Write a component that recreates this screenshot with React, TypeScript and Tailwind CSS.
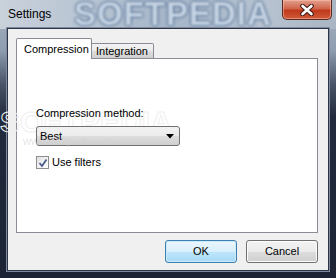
import React from "react";

const font = { fontFamily: '"Liberation Sans", Arial, sans-serif' };

function CloseX() {
  return (
    <svg width="14" height="12" viewBox="0 0 14 12">
      <path d="M2.5 2 L11.5 10 M11.5 2 L2.5 10" stroke="#3b1a14" strokeWidth="4.6" strokeLinecap="round" />
      <path d="M2.5 2 L11.5 10 M11.5 2 L2.5 10" stroke="#ffffff" strokeWidth="2.6" strokeLinecap="round" />
    </svg>
  );
}

export default function App() {
  return (
    <div
      className="relative w-[336px] h-[278px] overflow-hidden flex flex-col bg-[linear-gradient(180deg,#a9b6c5_0%,#8f9db0_18%,#4a5569_30%,#222b3d_42%,#1b2334_100%)]"
      style={font}
    >
      {/* Title bar */}
      <div className="relative h-[29px] shrink-0 flex items-start overflow-hidden bg-[linear-gradient(90deg,#c9d1db_0%,#b9c5d3_25%,#a6b6c9_50%,#b6c2d0_80%,#a9b5c3_100%)]">
        <div className="absolute left-[74px] top-[-4px] text-[33px] leading-[36px] font-bold tracking-[1px] text-[#c4d2e2] blur-[1.2px] whitespace-nowrap select-none [text-shadow:0_0_3px_#34557f,0_0_2px_#34557f]">
          SOFTPEDIA
        </div>
        <div className="relative pl-[8px] pt-[7px] text-[12px] leading-[15px] text-black">Settings</div>
        <div className="absolute right-[4px] top-0 w-[50px] h-[20px] rounded-b-[5px] border border-t-0 border-[#5a2a22] bg-[linear-gradient(180deg,#e2a08f_0%,#d1654b_45%,#c0391b_55%,#cf5a3a_100%)] flex items-center justify-center shadow-[inset_0_0_0_1px_rgba(255,200,180,0.5)]">
          <CloseX />
        </div>
      </div>

      {/* Body with frame */}
      <div className="flex-1 px-[8px] pb-[8px] flex">
        <div className="relative flex-1 flex flex-col bg-[#f0f0f0] pt-[9px] pl-[8px] pr-[10px] pb-[7px] shadow-[0_0_0_1px_#2c3446,0_0_0_2px_#7d8aa0]">
          {/* Tabs */}
          <div className="relative z-10 -mb-px flex items-end h-[21px] text-[11px] leading-[13px] text-black">
            <div className="w-[76px] h-[21px] bg-white border-t border-l border-r border-[#898c95] rounded-t-[2px] flex items-start pt-[4px] pl-[7px]">
              Compression
            </div>
            <div className="w-[62px] h-[16px] border-t border-r border-b border-[#898c95] bg-[linear-gradient(180deg,#f2f2f2_0%,#ebebeb_50%,#dddddd_51%,#cfcfcf_100%)] rounded-tr-[2px] flex items-start pt-[1px] pl-[4px]">
              Integration
            </div>
          </div>

          {/* Panel */}
          <div className="relative h-[175px] border border-[#898c95] bg-white pl-[19px] pt-[47px] text-[11px] text-black">
            <div className="absolute left-[-17px] top-[40px] text-[30px] font-bold text-transparent [-webkit-text-stroke:1px_#efefef] whitespace-nowrap select-none pointer-events-none">
              SOFTPEDIA
            </div>
            <div className="relative h-[15px] leading-[15px]">Compression method:</div>
            <div className="relative mt-[5px] w-[144px] h-[20px] rounded-[3px] border border-[#707070] bg-[linear-gradient(180deg,#f2f2f2_0%,#ebebeb_50%,#dddddd_51%,#cfcfcf_100%)] flex items-center justify-between pl-[3px] pr-[5px]">
              <span className="leading-[13px]">Best</span>
              <svg width="8" height="5" viewBox="0 0 8 5">
                <path d="M0 0 H8 L4 4.5 Z" fill="#000" />
              </svg>
              <div className="absolute left-[-14px] top-[6px] text-[11px] text-[#d2d2d2] opacity-60 whitespace-nowrap pointer-events-none">
                www.softpedia.com
              </div>
            </div>
            <div className="mt-[10px] flex items-center h-[13px]">
              <div className="w-[13px] h-[13px] border border-[#8e8f8f] bg-[linear-gradient(135deg,#dedede_0%,#f6f6f6_60%,#ffffff_100%)] flex items-center justify-center">
                <svg width="10" height="10" viewBox="0 0 10 10">
                  <path d="M1.5 5 L4 8 L8.5 1.5" stroke="#4a5d8c" strokeWidth="1.8" fill="none" />
                </svg>
              </div>
              <span className="ml-[3px] leading-[13px]">Use filters</span>
            </div>
          </div>

          {/* Buttons */}
          <div className="mt-[7px] flex justify-end gap-[9px] text-[11px] text-black">
            <button className="w-[72px] h-[23px] rounded-[3px] border border-[#3c7fb1] bg-[linear-gradient(180deg,#eaf6fd_0%,#d9f0fc_50%,#bee6fd_51%,#a7d9f5_100%)] shadow-[inset_0_0_0_1px_#cbe9f9] flex items-center justify-center">
              OK
            </button>
            <button className="w-[72px] h-[23px] rounded-[3px] border border-[#707070] bg-[linear-gradient(180deg,#f2f2f2_0%,#ebebeb_50%,#dddddd_51%,#cfcfcf_100%)] shadow-[inset_0_0_0_1px_#fcfcfc] flex items-center justify-center">
              Cancel
            </button>
          </div>
        </div>
      </div>
    </div>
  );
}
